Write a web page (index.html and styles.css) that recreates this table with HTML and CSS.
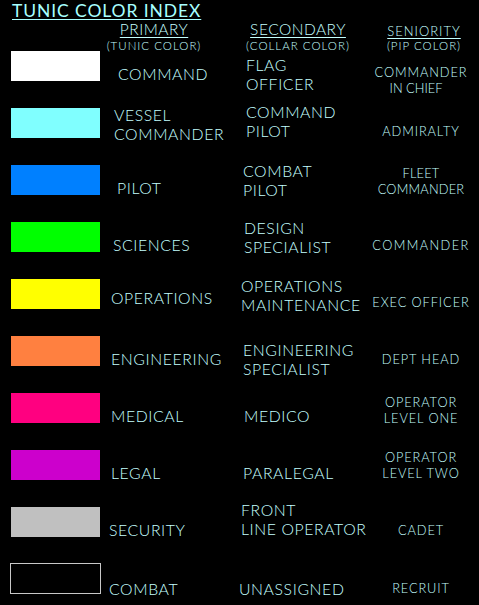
FILE: index.html
```html
<!DOCTYPE html>
<html>
<head>
<meta charset="utf-8">
<link rel="stylesheet" href="styles.css">
<title>Tunic Color Index</title>
</head>
<body>
<div class="page">
  <h1 class="title">TUNIC COLOR INDEX</h1>
  <div class="head">
    <div class="hcell hprimary"><span class="hlabel">PRIMARY</span><span class="hsub">(TUNIC COLOR)</span></div>
    <div class="hcell hsecondary"><span class="hlabel">SECONDARY</span><span class="hsub">(COLLAR COLOR)</span></div>
    <div class="hcell hsenior"><span class="hlabel small">SENIORITY</span><span class="hsub">(PIP COLOR)</span></div>
  </div>
  <div class="table">
    <div class="sw white"></div>
    <div class="pri i7">COMMAND</div>
    <div class="sec i3">FLAG<br>OFFICER</div>
    <div class="sen down6">COMMANDER<br><span class="in-chief">IN CHIEF</span></div>

    <div class="sw cyan"></div>
    <div class="pri i3 up6">VESSEL<br>COMMANDER</div>
    <div class="sec i3 up9">COMMAND<br>PILOT</div>
    <div class="sen">ADMIRALTY</div>

    <div class="sw blue"></div>
    <div class="pri i6">PILOT</div>
    <div class="sec up7">COMBAT<br>PILOT</div>
    <div class="sen up6 tight">FLEET<br>COMMANDER</div>

    <div class="sw green"></div>
    <div class="pri i2">SCIENCES</div>
    <div class="sec i1 up7">DESIGN<br>SPECIALIST</div>
    <div class="sen wide">COMMANDER</div>

    <div class="sw yellow"></div>
    <div class="pri up4">OPERATIONS</div>
    <div class="sec n2 up6">OPERATIONS<br>MAINTENANCE</div>
    <div class="sen">EXEC OFFICER</div>

    <div class="sw orange"></div>
    <div class="pri">ENGINEERING</div>
    <div class="sec">ENGINEERING<br>SPECIALIST</div>
    <div class="sen">DEPT HEAD</div>

    <div class="sw pink"></div>
    <div class="pri">MEDICAL</div>
    <div class="sec i1">MEDICO</div>
    <div class="sen up5">OPERATOR<br>LEVEL ONE</div>

    <div class="sw purple"></div>
    <div class="pri">LEGAL</div>
    <div class="sec">PARALEGAL</div>
    <div class="sen up7">OPERATOR<br>LEVEL TWO</div>

    <div class="sw gray"></div>
    <div class="pri n2">SECURITY</div>
    <div class="sec n2 up10">FRONT<br>LINE OPERATOR</div>
    <div class="sen">CADET</div>

    <div class="sw outline"></div>
    <div class="pri n2 down1">COMBAT</div>
    <div class="sec n4 down1">UNASSIGNED</div>
    <div class="sen down1">RECRUIT</div>
  </div>
</div>
</body>
</html>
```
FILE: styles.css
```css
html, body {
  margin: 0;
  padding: 0;
  background: #000;
}
body {
  width: 479px;
  height: 605px;
  overflow: hidden;
  font-family: Lato, "DejaVu Sans", sans-serif;
  font-weight: 300;
  color: #c4ffff;
}
.page {
  display: flex;
  flex-direction: column;
}
.title {
  margin: 0;
  height: 20px;
  padding-left: 12px;
  font-size: 17.5px;
  line-height: 21px;
  font-weight: 400;
  color: #a8ffff;
  text-decoration: underline;
  text-underline-offset: 2px;
  letter-spacing: 0.9px;
  white-space: nowrap;
}
.head {
  display: grid;
  grid-template-columns: 108px 140px 135px 96px;
  height: 29px;
}
.hcell {
  display: flex;
  flex-direction: column;
  align-items: center;
}
.hprimary { grid-column: 2; width: 92px; }
.hsecondary { grid-column: 3; width: 100px; }
.hsenior { grid-column: 4; width: 72px; margin-left: 5px; }
.hlabel {
  font-size: 15.5px;
  line-height: 19px;
  text-decoration: underline;
  text-underline-offset: 2px;
  letter-spacing: 0.5px;
}
.hlabel.small {
  font-size: 13px;
  padding-top: 3px;
  line-height: 16px;
  letter-spacing: 1px;
}
.hsub {
  font-size: 11.5px;
  line-height: 14px;
  letter-spacing: 1px;
  white-space: nowrap;
}
.table {
  display: grid;
  grid-template-columns: 111px 132px 127px 102px;
  grid-auto-rows: 57px;
}
.sw {
  width: 89px;
  height: 30px;
  margin: 2px 0 0 11px;
}
.white { background: #ffffff; }
.cyan { background: #80ffff; }
.blue { background: #0080ff; }
.green { background: #00ff00; }
.yellow { background: #ffff00; }
.orange { background: #ff8040; }
.pink { background: #ff0080; }
.purple { background: #cc00cc; }
.gray { background: #c0c0c0; }
.outline {
  width: 89px;
  height: 29px;
  margin: 1px 0 0 10px;
  border: 1px solid #c8c8c8;
}
.pri, .sec, .sen {
  align-self: center;
  margin-bottom: 8px;
  white-space: nowrap;
}
.pri, .sec {
  font-size: 15.8px;
  line-height: 19px;
  letter-spacing: 0.6px;
}
.sen {
  font-size: 12.8px;
  line-height: 16px;
  letter-spacing: 0.9px;
  text-align: center;
}
.sen.tight { letter-spacing: 0.2px; }
.sen.wide { letter-spacing: 1.4px; }
.in-chief { display: inline-block; margin-right: 10px; letter-spacing: 0; }
.i1 { padding-left: 1px; }
.i2 { padding-left: 2px; }
.i3 { padding-left: 3px; }
.i6 { padding-left: 6px; }
.i7 { padding-left: 7px; }
.n2 { margin-left: -2px; }
.n4 { margin-left: -4px; }
.up4 { margin-bottom: 17px; }
.up5 { margin-bottom: 19px; }
.up6 { margin-bottom: 21px; }
.up7 { margin-bottom: 23px; }
.up9 { margin-bottom: 27px; }
.up10 { margin-bottom: 29px; }
.down1 { margin-bottom: 5px; }
.down6 { margin-bottom: 0; margin-top: 5px; }
```
